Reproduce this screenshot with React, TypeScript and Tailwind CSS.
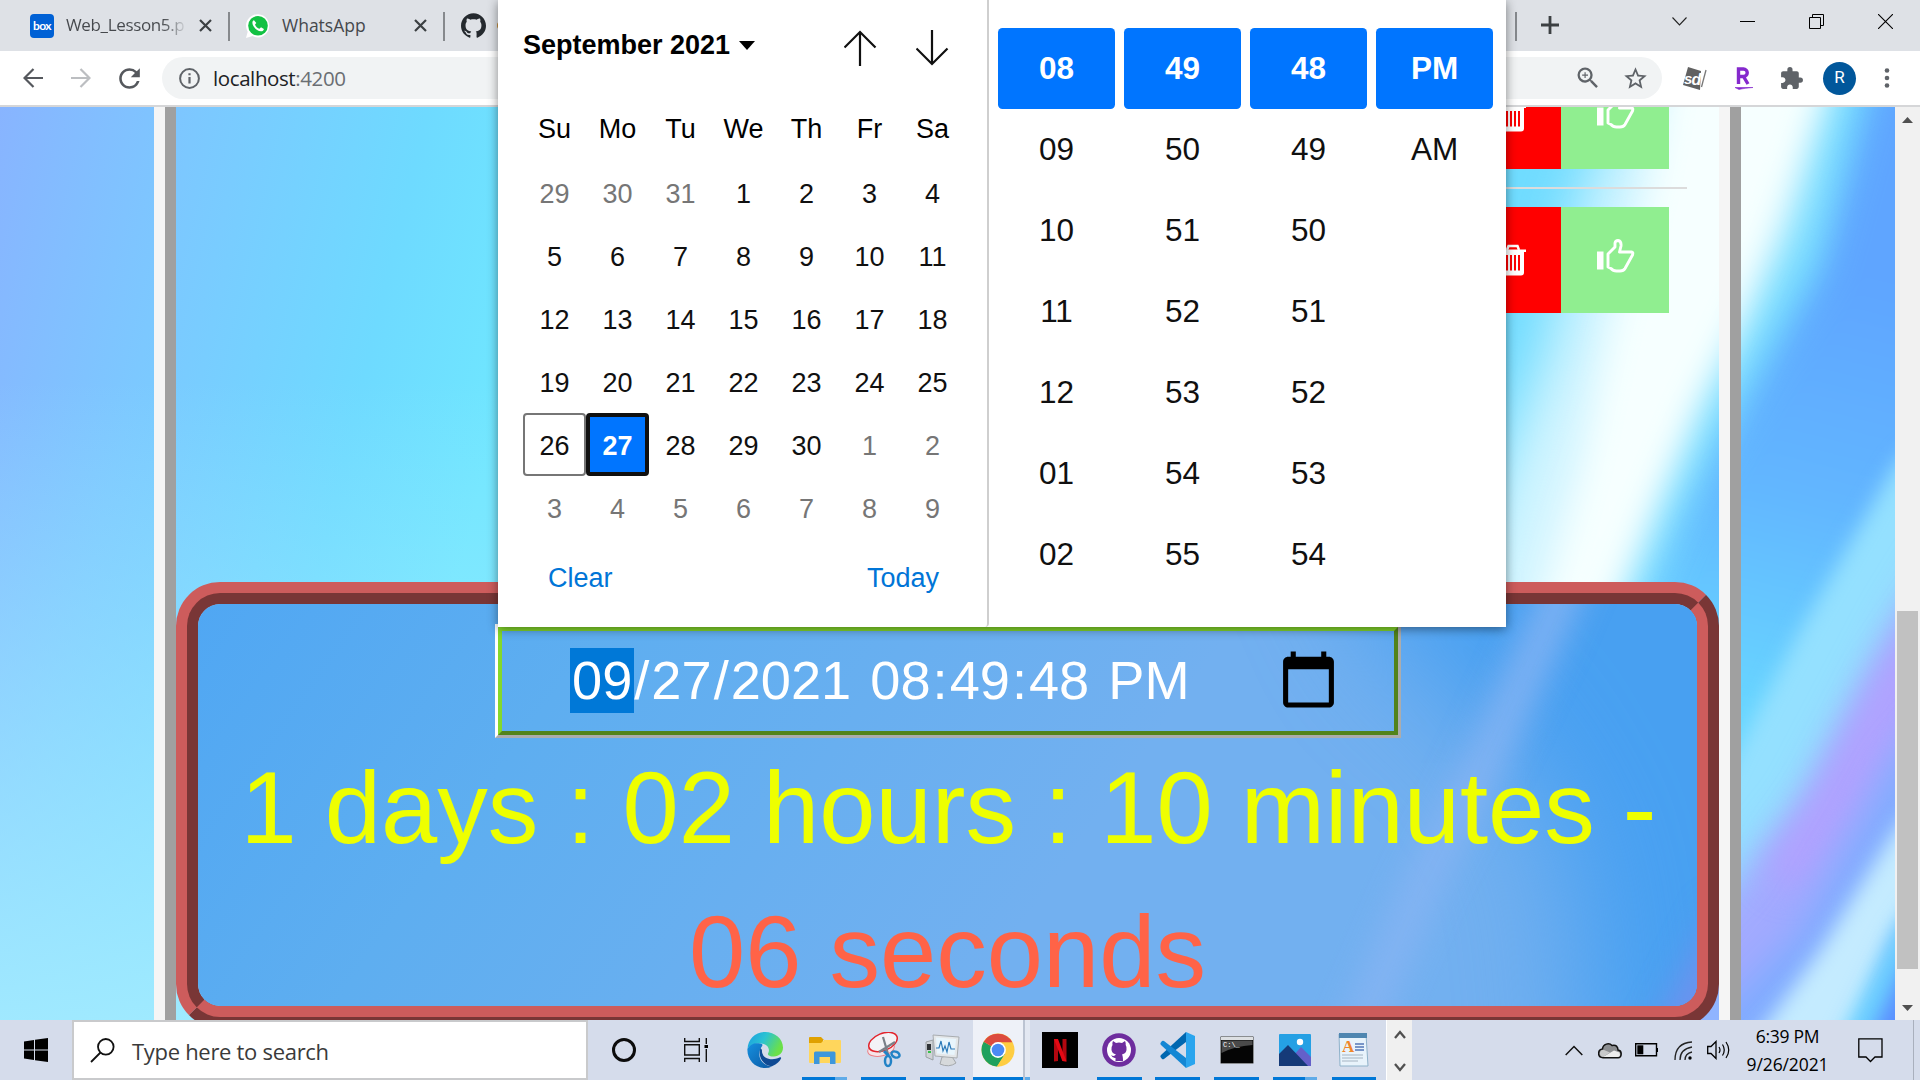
import React from "react";
import { SiGithub } from "react-icons/si";
import { MdStarBorder, MdExtension, MdRefresh, MdOutlineZoomIn } from "react-icons/md";

const UI = "font-['Open_Sans',sans-serif]";
const ARIAL = "font-['Liberation_Sans',Arial,sans-serif]";

/* ---------- Browser chrome ---------- */

function CloseX() {
  return (
    <svg width="13" height="13" viewBox="0 0 13 13" className="block">
      <path d="M1 1L12 12M12 1L1 12" stroke="#3c4043" strokeWidth="2.2" />
    </svg>
  );
}

function WhatsAppIcon() {
  return (
    <svg width="24" height="24" viewBox="0 0 24 24" className="block">
      <path d="M0 24l1.7-6.2A11.6 11.6 0 1 1 12 23.4a11.6 11.6 0 0 1-5.5-1.4z" fill="#fff" />
      <circle cx="12" cy="11.8" r="9.8" fill="#12c143" />
      <path
        d="M8 6.3c-.9.3-1.7 1.300-1.600 2.600.3 3.800 4.600 8.100 8.500 8.300 1.500.1 2.800-.9 3-2.300l-2.900-1.600-1.500 1.500c-2-.6-3.800-2.400-4.500-4.300l1.300-1.400z"
        fill="#fff"
      />
    </svg>
  );
}

function TabStrip() {
  return (
    <div className="flex h-[51px] w-full shrink-0 items-start bg-[#dee1e6]">
      <div className="ml-[30px] mt-[14px] flex h-[24px] w-[24px] shrink-0 items-center justify-center rounded-[4px] bg-[#0061d5]">
        <span className="font-[Lato,sans-serif] text-[12px] font-bold leading-none tracking-[-0.6px] text-white">box</span>
      </div>
      <div
        className={`${UI} ml-[12px] mt-[13px] w-[121px] shrink-0 whitespace-nowrap bg-gradient-to-r from-[#45484c] from-80% to-[#dee1e6] bg-clip-text text-[17px] leading-[24px] tracking-[-0.35px] text-transparent`}
      >
        Web_Lesson5.p
      </div>
      <div className="ml-[12px] mt-[19px] shrink-0"><CloseX /></div>
      <div className="ml-[16px] mt-[12px] h-[29px] w-[2px] shrink-0 bg-[#86898d]" />
      <div className="ml-[16px] mt-[14px] shrink-0"><WhatsAppIcon /></div>
      <div className={`${UI} ml-[12px] mt-[13px] w-[132px] shrink-0 text-[17.5px] leading-[24px] text-[#45484c]`}>WhatsApp</div>
      <div className="mt-[19px] shrink-0"><CloseX /></div>
      <div className="ml-[16px] mt-[12px] h-[29px] w-[2px] shrink-0 bg-[#86898d]" />
      <SiGithub className="ml-[16px] mt-[13px] h-[25px] w-[25px] shrink-0 text-[#24292e]" />
      <div className="ml-[11px] mt-[22px] h-[7px] w-[3px] shrink-0 rounded-l-full bg-[#c58f3d]" />
      <div className="ml-auto mt-[12px] h-[29px] w-[2px] shrink-0 bg-[#86898d]" />
      <svg className="ml-[24px] mt-[16px] shrink-0" width="18" height="18" viewBox="0 0 18 18">
        <path d="M9 0V18M0 9H18" stroke="#3c4043" strokeWidth="2.800" />
      </svg>
      <svg className="ml-[113px] mt-[16px] shrink-0" width="15" height="11" viewBox="0 0 15 11">
        <path d="M.5 1.500L7.500 9L14.500 1.500" fill="none" stroke="#222" strokeWidth="1.100" />
      </svg>
      <div className="ml-[53px] mt-[21px] h-px w-[15px] shrink-0 bg-black" />
      <svg className="ml-[54px] mt-[14px] shrink-0" width="15" height="15" viewBox="0 0 15 15">
        <path d="M.5 3.500H11.500V14.500H.5zM3.500 3.500V.5H14.500V11.500H11.500" fill="none" stroke="#000" />
      </svg>
      <svg className="ml-[54px] mr-[27px] mt-[14px] shrink-0" width="15" height="15" viewBox="0 0 15 15">
        <path d="M0 0L15 15M15 0L0 15" stroke="#000" strokeWidth="1.100" />
      </svg>
    </div>
  );
}

function Toolbar() {
  return (
    <div className="flex h-[56px] w-full shrink-0 items-center border-b-2 border-[#d5d6d8] bg-white">
      <svg className="ml-[23px] shrink-0" width="20" height="20" viewBox="0 0 20 20">
        <path d="M20 10H1.800M10.500 1L1.500 10L10.500 19" fill="none" stroke="#55585d" strokeWidth="2.200" />
      </svg>
      <svg className="ml-[28px] shrink-0" width="20" height="20" viewBox="0 0 20 20">
        <path d="M0 10H18.200M9.500 1L18.500 10L9.500 19" fill="none" stroke="#bcbec1" strokeWidth="2.200" />
      </svg>
      <MdRefresh className="ml-[23px] h-[31px] w-[31px] shrink-0 text-[#55585d]" />
      <div className="ml-[17px] flex h-[42px] w-[1500px] shrink-0 items-center rounded-full bg-[#f1f3f4]">
        <svg className="ml-[17px] shrink-0" width="21" height="21" viewBox="0 0 21 21">
          <circle cx="10.500" cy="10.500" r="9.400" fill="none" stroke="#5f6368" strokeWidth="2" />
          <path d="M10.500 9V15.500M10.500 5.200V7.300" stroke="#5f6368" strokeWidth="2.200" />
        </svg>
        <div className={`${UI} ml-[13px] text-[20.5px] leading-[28px] tracking-[-0.4px] text-[#202124]`}>
          localhost<span className="text-[#6a6e73]">:4200</span>
        </div>
        <MdOutlineZoomIn className="ml-auto h-[28px] w-[28px] text-[#5f6368]" />
        <MdStarBorder className="ml-[20px] mr-[13px] h-[27px] w-[27px] text-[#5f6368]" />
      </div>
      <svg className="ml-[20px] shrink-0" width="26" height="26" viewBox="0 0 26 26">
        <path d="M6 2L19 6L18 25L1 20z" fill="#616161" />
        <text x="2" y="18.500" fontSize="15" fontStyle="italic" fontWeight="700" fontFamily="Liberation Sans, sans-serif" fill="#fff">s</text>
        <text x="9.500" y="19.500" fontSize="16" fontStyle="italic" fontWeight="700" fontFamily="Liberation Sans, sans-serif" fill="#fff">d</text>
        <path d="M24 5L19.500 22" stroke="#777" strokeWidth="1.300" />
      </svg>
      <svg className="ml-[26px] shrink-0" width="20" height="24" viewBox="0 0 20 24">
        <path d="M4.500 18V3H9.500A3.700 3.700 0 0 1 9.500 10.500H5M9.500 10.500L14 18" fill="none" stroke="#8529cd" strokeWidth="3.400" />
        <path d="M1 21.500H19C13 22 9 22.500 5 23.500z" fill="#8529cd" stroke="#8529cd" strokeWidth=".6" />
      </svg>
      <MdExtension className="ml-[25px] h-[25px] w-[25px] shrink-0 text-[#5f6368]" />
      <div className="ml-[19px] flex h-[33px] w-[33px] shrink-0 items-center justify-center rounded-full bg-[#01579b] font-[Roboto,sans-serif] text-[17px] text-white">R</div>
      <svg className="ml-[28px] shrink-0" width="6" height="20" viewBox="0 0 6 20">
        <circle cx="3" cy="2.500" r="2.300" fill="#5f6368" />
        <circle cx="3" cy="10" r="2.300" fill="#5f6368" />
        <circle cx="3" cy="17.500" r="2.300" fill="#5f6368" />
      </svg>
    </div>
  );
}

/* ---------- Page ---------- */

function Wallpaper() {
  return (
    <svg className="absolute inset-0" width="1895" height="913" viewBox="0 107 1895 913" preserveAspectRatio="none">
      <defs>
        <linearGradient id="base" gradientUnits="userSpaceOnUse" x1="0" y1="107" x2="540" y2="235">
          <stop offset="0" stopColor="#88b4ff" />
          <stop offset=".35" stopColor="#7cc8ff" />
          <stop offset=".75" stopColor="#6edaff" />
          <stop offset="1" stopColor="#6fe6ff" />
        </linearGradient>
        <linearGradient id="low" x1="0" y1="0" x2="0" y2="1">
          <stop offset=".3" stopColor="#a4ecff" stopOpacity="0" />
          <stop offset="1" stopColor="#a4ecff" stopOpacity=".9" />
        </linearGradient>
        <linearGradient id="blueArea" gradientUnits="userSpaceOnUse" x1="1880" y1="280" x2="1770" y2="720">
          <stop offset="0" stopColor="#5fa5ff" />
          <stop offset=".5" stopColor="#62b6ff" />
          <stop offset="1" stopColor="#68d6ff" />
        </linearGradient>
        <filter id="b8" colorInterpolationFilters="sRGB" x="-50%" y="-20%" width="200%" height="140%"><feGaussianBlur stdDeviation="10" /></filter>
        <filter id="b16" colorInterpolationFilters="sRGB" x="-50%" y="-20%" width="200%" height="140%"><feGaussianBlur stdDeviation="17" /></filter>
        <filter id="b30" colorInterpolationFilters="sRGB" x="-50%" y="-20%" width="200%" height="140%"><feGaussianBlur stdDeviation="28" /></filter>
      </defs>
      <rect x="0" y="107" width="1895" height="913" fill="url(#base)" />
      <rect x="0" y="107" width="1300" height="913" fill="url(#low)" />
      <rect x="1400" y="107" width="495" height="913" fill="#70dcff" />
      <path d="M1890 40L1865 107L1820 270L1755 380L1690 500L1640 610L1500 1100H1990V40z" fill="url(#blueArea)" filter="url(#b16)" />
      <path d="M1650 40L1580 200L1550 340L1500 470L1450 640L1600 640L1655 500L1700 400L1745 310L1790 220L1830 40z" fill="#d4f5ff" filter="url(#b30)" />
      <path d="M1675 40L1650 180L1610 330L1580 470L1530 640L1600 640L1655 500L1695 405L1738 320L1775 230L1825 90L1835 40z" fill="#f6ffff" filter="url(#b16)" />
      <path d="M1975 380L1895 465L1800 630L1735 755L1690 850V1100H1975z" fill="#94e0ff" filter="url(#b8)" />
      <path d="M1975 490L1895 620L1800 800L1690 940V1100H1975z" fill="#a2aaff" filter="url(#b16)" />
      <path d="M1960 590L1895 685L1835 800L1780 880" fill="none" stroke="#b4a0ff" strokeWidth="36" filter="url(#b16)" />
      <path d="M1960 690L1895 765L1800 930L1700 1030V1100H1960z" fill="#80acff" filter="url(#b16)" />
      <path d="M1975 740L1895 830L1820 950L1740 1060H1850L1895 935L1975 830z" fill="#c4ebff" filter="url(#b8)" />
      <path d="M1960 840L1895 930L1830 1060H1960z" fill="#6cd4ff" filter="url(#b8)" />
      <path d="M1960 890L1905 960L1860 1060H1960z" fill="#5a8dff" filter="url(#b8)" />
      <rect x="1500" y="960" width="225" height="60" fill="#90b4ff" />
    </svg>
  );
}

function CardBackdrop() {
  return (
    <svg className="absolute inset-0 rounded-[22px]" width="1499" height="402" viewBox="198 604 1499 402" preserveAspectRatio="none">
      <defs>
        <linearGradient id="card" gradientUnits="userSpaceOnUse" x1="198" y1="604" x2="900" y2="1100">
          <stop offset="0" stopColor="#50a7f3" />
          <stop offset=".4" stopColor="#5eaef0" />
          <stop offset="1" stopColor="#72b0f0" />
        </linearGradient>
        <filter id="c30" colorInterpolationFilters="sRGB" x="-100%" y="-50%" width="300%" height="200%"><feGaussianBlur stdDeviation="55" /></filter>
        <filter id="c12" colorInterpolationFilters="sRGB" x="-50%" y="-50%" width="200%" height="200%"><feGaussianBlur stdDeviation="16" /></filter>
      </defs>
      <rect x="198" y="604" width="1499" height="402" fill="url(#card)" />
      <path d="M1300 440L1390 640L1500 740L1570 860L1600 1200H1900V440z" fill="#48a0f1" filter="url(#c30)" />
      <path d="M1600 500L1550 620L1490 750L1420 890L1330 1100" fill="none" stroke="#86b4f3" strokeWidth="40" opacity=".85" filter="url(#c12)" />
      <path d="M1720 900L1650 1040H1740z" fill="#6c92ee" filter="url(#c12)" />
    </svg>
  );
}

function Trash() {
  return (
    <svg width="26" height="32" viewBox="0 0 26 32" className="block">
      <path d="M7 6L8.500 2H17.500L19 6" fill="none" stroke="#fff" strokeWidth="2.500" />
      <path d="M0 5.500H26V8H24V28.500Q24 31.500 21 31.500H5Q2 31.500 2 28.500V8H0z" fill="#fff" />
      <path d="M7 11V26.500M11 11V26.500M15 11V26.500M19 11V26.500" stroke="#f00" strokeWidth="2" />
    </svg>
  );
}

function Thumb() {
  return (
    <svg width="38" height="34" viewBox="0 0 38 34" className="block">
      <path d="M0 12.500H6.500V30.500H0z" fill="#fff" />
      <path
        d="M11 15L18 8V4Q18.500 1.500 21 1.500Q24.500 2 24 7L22.500 13H34.500Q36.500 13 35.500 16L28 29.500Q26.500 32 23 32H19.500Q16 32 14 29.500L11 28z"
        fill="none"
        stroke="#fff"
        strokeWidth="2.900"
        strokeLinejoin="round"
      />
    </svg>
  );
}

function TaskActions() {
  return (
    <div className="flex h-[106px] w-[216px]">
      <div className="flex w-[108px] items-center justify-center bg-[#ff0000]">
        <div className="ml-[11px]"><Trash /></div>
      </div>
      <div className="flex w-[108px] items-center justify-center bg-[#90ee90]">
        <div className="ml-[1px] mt-[-8px]"><Thumb /></div>
      </div>
    </div>
  );
}

function DateField() {
  return (
    <div className="ml-[297px] mt-[20px] h-[114px] w-[906px] border-[3px] border-b-[#acacac] border-l-white border-r-[#acacac] border-t-white">
      <div className="flex h-full w-full items-center border-4 border-b-[#52831b] border-l-[#84d82c] border-r-[#52831b] border-t-[#84d82c] pb-[2px]">
        <div className={`${ARIAL} ml-[68px] flex items-center whitespace-pre text-[54.2px] leading-[65px] text-white`}>
          <span className="bg-[#0078d7] px-[2px]">09</span>
          <span>/</span>
          <span className="px-[2px]">27</span>
          <span>/</span>
          <span className="px-[2px]">2021</span>
          <span> </span>
          <span className="px-[2px]">08</span>
          <span>:</span>
          <span className="px-[2px]">49</span>
          <span>:</span>
          <span className="px-[2px]">48</span>
          <span> </span>
          <span className="px-[2px]">PM</span>
        </div>
        <svg className="mb-[2px] ml-auto mr-[55px]" width="61" height="61" viewBox="0 0 24 24">
          <path d="M20 3h-1V1h-2v2H7V1H5v2H4c-1.100 0-2 .9-2 2v16c0 1.100.9 2 2 2h16c1.100 0 2-.9 2-2V5c0-1.100-.9-2-2-2zm0 18H4V8h16v13z" />
        </svg>
      </div>
    </div>
  );
}

function Page() {
  return (
    <div className="relative flex h-[913px] w-full shrink-0 overflow-hidden">
      <Wallpaper />
      <div className="relative ml-[154px] flex h-full w-[1587px] shrink-0">
        <div className="w-[11px] bg-[#f5f5f5]" />
        <div className="w-[11px] bg-[#a0a0a0]" />
        <div className="flex w-[1543px] flex-col">
          <div className="mr-[50px] mt-[-44px] flex h-[106px] shrink-0 justify-end"><TaskActions /></div>
          <div className="mr-[32px] mt-[18px] h-[2px] w-[600px] shrink-0 self-end bg-[#dcdcdc]" />
          <div className="mr-[50px] mt-[18px] flex h-[106px] shrink-0 justify-end"><TaskActions /></div>
          <div className="mt-[269px] h-[446px] shrink-0 rounded-[44px] border-[22px] border-[#cd5c5c] [border-style:ridge]">
            <div className="relative flow-root h-full">
              <CardBackdrop />
              <div className="relative flow-root">
                <DateField />
                <div className={`${ARIAL} text-center text-[101.100px] text-[#eeff00]`}>
                  <div className="whitespace-nowrap pl-[2px] leading-[140px]">1 days : 02 hours : 10 minutes -</div>
                  <div className="mt-[18px] leading-[112px] text-[#ff6347]">06 seconds</div>
                </div>
              </div>
            </div>
          </div>
        </div>
        <div className="w-[11px] bg-[#f5f5f5]" />
        <div className="w-[11px] bg-[#a0a0a0]" />
      </div>
      <div className="relative ml-auto flex w-[25px] flex-col items-center bg-[#f1f1f1]">
        <svg className="mt-[10px]" width="11" height="6" viewBox="0 0 11 6"><path d="M0 6L5.500 0L11 6z" fill="#505050" /></svg>
        <div className="mt-[488px] h-[358px] w-[21px] bg-[#c1c1c1]" />
        <svg className="mt-[36px]" width="11" height="6" viewBox="0 0 11 6"><path d="M0 0L5.500 6L11 0z" fill="#505050" /></svg>
      </div>
    </div>
  );
}

/* ---------- Date-time picker ---------- */

const weekdays = ["Su", "Mo", "Tu", "We", "Th", "Fr", "Sa"];
const days = [29, 30, 31, ...Array.from({ length: 30 }, (_, i) => i + 1), 1, 2, 3, 4, 5, 6, 7, 8, 9];
const timeColumns = [
  ["08", "09", "10", "11", "12", "01", "02"],
  ["49", "50", "51", "52", "53", "54", "55"],
  ["48", "49", "50", "51", "52", "53", "54"],
  ["PM", "AM"],
];

function dayClass(i: number) {
  if (i === 28) return "rounded-[4px] border-2 border-[#767676] text-[#101010]";
  if (i === 29) return "rounded-[4px] border-4 border-[#101010] bg-[#0075ff] font-bold text-white";
  if (i < 3 || i > 32) return "text-[#767676]";
  return "text-[#101010]";
}

function Picker() {
  return (
    <div className={`${ARIAL} absolute left-[498px] top-0 flex h-[627px] w-[1008px] bg-white text-black shadow-[0_2px_10px_rgba(0,0,0,0.45)]`}>
      <div className="w-[491px] rounded-br-[4px] border-r-2 border-[#cfcfcf]">
        <div className="flex h-[97px] items-start">
          <div className="ml-[25px] mt-[30px] whitespace-nowrap text-[27px] font-bold leading-[31px]">September 2021</div>
          <svg className="ml-[9px] mt-[41px]" width="16" height="9" viewBox="0 0 16 9"><path d="M0 0H16L8 9z" /></svg>
          <svg className="ml-auto mt-[30px]" width="33" height="36" viewBox="0 0 33 36">
            <path d="M16 36V1.500M.5 17.500L16 2L31.500 17.500" fill="none" stroke="#101010" strokeWidth="2.200" />
          </svg>
          <svg className="ml-[39px] mr-[38px] mt-[30px]" width="33" height="36" viewBox="0 0 33 36">
            <path d="M16 0V34.500M.5 18.500L16 34L31.500 18.500" fill="none" stroke="#101010" strokeWidth="2.200" />
          </svg>
        </div>
        <div className="ml-[25px] grid w-[441px] grid-cols-7 text-center text-[27px]">
          {weekdays.map((d) => (
            <div key={d} className="h-[64px] leading-[65px]">{d}</div>
          ))}
          {days.map((d, i) => (
            <div key={i} className={`flex h-[63px] items-center justify-center pt-[3px] ${dayClass(i)}`}>{d}</div>
          ))}
        </div>
        <div className="ml-[50px] mr-[48px] mt-[24px] flex justify-between text-[27px] leading-[31px] text-[#0075d7]">
          <span>Clear</span>
          <span>Today</span>
        </div>
      </div>
      <div className="ml-[9px] mt-[28px] flex gap-[9px]">
        {timeColumns.map((col, c) => (
          <div key={c} className="w-[117px] text-center text-[31.500px]">
            {col.map((v, i) => (
              <div
                key={v}
                className={
                  i === 0
                    ? "h-[81px] rounded-[4.500px] bg-[#0075ff] font-bold leading-[80px] text-white"
                    : "h-[81px] leading-[80px] text-[#101010]"
                }
              >
                {v}
              </div>
            ))}
          </div>
        ))}
      </div>
    </div>
  );
}

/* ---------- Taskbar ---------- */

function EdgeIcon() {
  return (
    <svg width="36" height="36" viewBox="0 0 36 36">
      <defs>
        <linearGradient id="e1" x1="0" y1="0" x2="1" y2=".4"><stop offset="0" stopColor="#1b9de2" /><stop offset=".5" stopColor="#2bc3d2" /><stop offset="1" stopColor="#6be048" /></linearGradient>
        <linearGradient id="e2" x1="0" y1="0" x2="1" y2="1"><stop offset="0" stopColor="#1590df" /><stop offset="1" stopColor="#0c59a4" /></linearGradient>
      </defs>
      <path d="M.5 17C1 7 8.500 0 18 0C28 0 36 7 36 15.500C36 21 32 24.500 27 24.500C23 24.500 20.500 23 21 21.500C23.500 18 21 12 14 11.500C8 11 3 13 .5 17z" fill="url(#e1)" />
      <path d="M.4 17C3 12 8 10.500 13 11.500C18 12.500 14 14 13 18C10 27 17 34 25 34.500Q22 36 18 36C8 36 0 28 .4 17z" fill="url(#e2)" />
      <path d="M13.500 16C10 26 18 34.500 25 34.200C30 32 33 29 34 26.500C34.500 25.500 33.500 25 32.500 25.600C24 29.500 14 26 15 18z" fill="#0f4a94" />
    </svg>
  );
}

function ExplorerIcon() {
  return (
    <svg width="32" height="27" viewBox="0 0 32 27">
      <path d="M0 1Q0 0 1 0H12L15 3H14V10H0z" fill="#e0a100" />
      <path d="M0 6H12L15 3H31Q32 3 32 4V25Q32 26 31 26H1Q0 26 0 25z" fill="#ffd65c" />
      <path d="M5 27V16Q5 14.500 6.500 14.500H25Q26.500 14.500 26.500 16V27H21V20H10.500V27z" fill="#3d97db" />
    </svg>
  );
}

function SnipIcon() {
  return (
    <svg width="34" height="36" viewBox="0 0 34 36">
      <ellipse cx="14" cy="17" rx="13.500" ry="7" fill="#f6e4e8" stroke="#ec8087" strokeWidth="1" transform="rotate(-12 14 17)" />
      <ellipse cx="16" cy="10" rx="15" ry="8.500" fill="#f3f3f6" stroke="#e2242c" strokeWidth="1.500" transform="rotate(-22 16 10)" />
      <path d="M16 5L21 22M28 10L12 20" stroke="#7b8087" strokeWidth="2.200" />
      <path d="M17 19L22 24" stroke="#2383c6" strokeWidth="3" />
      <ellipse cx="21" cy="29" rx="3" ry="5" fill="none" stroke="#2383c6" strokeWidth="2.500" />
      <ellipse cx="28.500" cy="22.500" rx="4.200" ry="2.800" fill="none" stroke="#2383c6" strokeWidth="2.500" transform="rotate(25 28.500 22.500)" />
    </svg>
  );
}

function PerfIcon() {
  return (
    <svg width="36" height="34" viewBox="0 0 36 34">
      <path d="M1 9L8 7V27L1 24z" fill="#d0d3d6" stroke="#9aa0a4" />
      <path d="M2 11H6V17H2z" fill="#2f3337" />
      <path d="M3 18H6V20H3z" fill="#35c24a" />
      <path d="M17 24L26 22L31 30Q24 35 15 31z" fill="#d6d9db" stroke="#a4a8ab" />
      <path d="M8 2L34 4L32 25L10 23z" fill="#e4e7e9" stroke="#a9adb0" />
      <path d="M11 4.500L31 6L29.500 22L12 20.500z" fill="#e8f5fc" />
      <path d="M11 15H14L16 8L18 18L20 13L22 19L24 9L26 16H30" fill="none" stroke="#2a79b8" strokeWidth="1.200" />
    </svg>
  );
}

function ChromeIcon() {
  return (
    <svg width="34" height="34" viewBox="0 0 34 34">
      <circle cx="17" cy="17" r="16.500" fill="#fecd42" />
      <path d="M17 17L2.700 8.800A16.500 16.500 0 0 0 16 33.500L24 21z" fill="#1fa15d" />
      <path d="M17 17L2.700 8.800A16.500 16.500 0 0 1 31.300 9.300H17z" fill="#dc4b3e" />
      <path d="M24 21L16 33.500H18L31 22z" fill="#fecd42" />
      <circle cx="17" cy="17" r="7.900" fill="#fff" />
      <circle cx="17" cy="17" r="6.300" fill="#4a8af4" />
    </svg>
  );
}

function NetflixIcon() {
  return (
    <svg width="36" height="36" viewBox="0 0 36 36">
      <rect width="36" height="36" />
      <path d="M12 7H16V29L12 29.500zM20.500 7H24.500V29.500L20.500 29z" fill="#b20710" />
      <path d="M12 7H16L24.500 29.500L20.300 29z" fill="#e50914" />
    </svg>
  );
}

function GitHubDesktopIcon() {
  return (
    <svg width="34" height="34" viewBox="0 0 34 34">
      <circle cx="17" cy="17" r="16.800" fill="#6e2d9e" />
      <circle cx="17" cy="17" r="12" fill="#fff" />
      <path d="M11 8L14 10Q17 9 20 10L23 8Q24 10 23.700 12Q25 14 24.500 17Q24 20.500 20 21.500Q21 23 21 28H13.500V25Q10.500 25.500 9 22Q12 24 14 21.500Q10 20.500 9.500 17Q9 14 10.500 12Q10 10 11 8z" fill="#6e2d9e" />
    </svg>
  );
}

function VSCodeIcon() {
  return (
    <svg width="36" height="36" viewBox="0 0 36 36">
      <path d="M26 0L35 4V32L26 36z" fill="#2aa5ee" />
      <path d="M26 0V10L4 27Q3 27.500 2 27L.5 25Q0 24 1 23z" fill="#0067b0" />
      <path d="M26 36V26L4 9Q3 8.500 2 9L.5 11Q0 12 1 13z" fill="#1487d4" />
    </svg>
  );
}

function CmdIcon() {
  return (
    <svg width="34" height="28" viewBox="0 0 34 28">
      <rect x=".5" y=".5" width="33" height="27" rx="1" fill="#050505" stroke="#8a8d90" />
      <rect x="1" y="1" width="32" height="3" fill="#dcdfe2" />
      <path d="M1.500 4.500H32.500V9Q15 10 1.500 17z" fill="#4a4a4a" />
      <text x="3" y="11" fontSize="7" fontFamily="Liberation Mono, monospace" fill="#fff">C:\_</text>
    </svg>
  );
}

function PhotosIcon() {
  return (
    <svg width="32" height="32" viewBox="0 0 32 32">
      <rect width="32" height="32" rx="1" fill="#25a0e4" />
      <path d="M15 21L22 13L32 23V32H15z" fill="#6460c9" />
      <path d="M0 20L9 11L29 32H0z" fill="#153a78" />
      <circle cx="21" cy="8" r="3.200" fill="#fff" />
    </svg>
  );
}

function WordPadIcon() {
  return (
    <svg width="32" height="34" viewBox="0 0 32 34">
      <path d="M1 1H28L30 33H2z" fill="#e8f3fb" stroke="#8fb2ca" />
      <path d="M1 0H29V5H1z" fill="#4f86b0" />
      <text x="4" y="19" fontSize="17" fontWeight="700" fontFamily="Liberation Serif, serif" fill="#f0872a">A</text>
      <path d="M17 11H26M17 14H26M17 17H26" stroke="#5478b8" strokeWidth="1.500" />
      <path d="M4 22H25M4 25H25M4 28H20" stroke="#a5b4c2" />
    </svg>
  );
}

function TaskbarApp({ children, w, line, split }: { children: React.ReactNode; w: string; line?: string; split?: boolean }) {
  return (
    <div className={`flex h-full shrink-0 flex-col items-center ${w}`}>
      <div className="flex h-[57px] w-full items-center justify-center pb-[1px] pt-[4px]">{children}</div>
      {line && (
        <div className={`flex h-[3px] bg-[#0078d7] ${line}`}>
          {split && <div className="ml-auto h-full w-[12px] bg-[#5fabe8]" />}
        </div>
      )}
    </div>
  );
}

function Taskbar() {
  return (
    <div className="flex h-[60px] w-full shrink-0 items-start overflow-hidden bg-[#d5dceb]">
      <div className="flex h-full w-[72px] shrink-0 items-center justify-center">
        <svg width="24" height="24" viewBox="0 0 24 24">
          <path d="M0 3.400L10 2V11.500H0zM11 1.800L24 0V11.500H11zM0 12.500H10V22L0 20.600zM11 12.500H24V24L11 22.200z" />
        </svg>
      </div>
      <div className="flex h-full w-[516px] shrink-0 items-center border-2 border-[#c9cacc] bg-white">
        <svg className="ml-[16px]" width="25" height="25" viewBox="0 0 25 25">
          <circle cx="15.800" cy="8.800" r="7.800" fill="none" stroke="#111" strokeWidth="1.800" />
          <path d="M10.500 14.500L1 24" stroke="#111" strokeWidth="1.800" />
        </svg>
        <div className={`${UI} ml-[17px] mt-[2px] text-[22px] leading-[30px] tracking-[-0.3px] text-[#3a3a3a]`}>Type here to search</div>
      </div>
      <div className="flex h-full w-[72px] shrink-0 items-center justify-center">
        <div className="h-[24px] w-[24px] rounded-full border-[3px] border-[#0c0c0c]" />
      </div>
      <div className="mr-[4px] flex h-full w-[71px] shrink-0 items-center justify-center">
        <svg width="24" height="24" viewBox="0 0 24 24">
          <path d="M.7 0V3.500H15.300V0M.7 24V20.500H15.300V24M.7 6.700H15.300V17H.7zM22.300 0V6M22.300 11V24" fill="none" stroke="#111" strokeWidth="1.400" />
          <rect x="20.500" y="7" width="3.500" height="3" />
        </svg>
      </div>
      <TaskbarApp w="w-[60px]"><EdgeIcon /></TaskbarApp>
      <TaskbarApp w="w-[59px]" line="w-[45px]" split><ExplorerIcon /></TaskbarApp>
      <TaskbarApp w="w-[59px]" line="w-[45px]"><SnipIcon /></TaskbarApp>
      <TaskbarApp w="w-[59px]" line="w-[45px]"><PerfIcon /></TaskbarApp>
      <div className="flex h-full w-[58px] shrink-0">
        <div className="ml-[1px] flex h-full w-[50px] bg-[#eef1f8]">
          <TaskbarApp w="w-[50px]" line="w-[50px]"><ChromeIcon /></TaskbarApp>
        </div>
        <div className="flex h-full w-[7px] flex-col justify-end border-l-2 border-[#bcc4d2] bg-[#e3e8f2]">
          <div className="h-[3px] bg-[#5fabe8]" />
        </div>
      </div>
      <TaskbarApp w="w-[60px]"><NetflixIcon /></TaskbarApp>
      <TaskbarApp w="w-[58px]" line="w-[45px]"><GitHubDesktopIcon /></TaskbarApp>
      <TaskbarApp w="w-[59px]" line="w-[45px]"><VSCodeIcon /></TaskbarApp>
      <TaskbarApp w="w-[59px]" line="w-[45px]"><CmdIcon /></TaskbarApp>
      <TaskbarApp w="w-[58px]" line="w-[44px]" split><PhotosIcon /></TaskbarApp>
      <TaskbarApp w="w-[59px]" line="w-[44px]"><WordPadIcon /></TaskbarApp>
      <div className="ml-[3px] flex h-full w-[26px] shrink-0 flex-col items-center border-l border-white bg-[#f0f0f0]">
        <svg className="mt-[10px]" width="12" height="9" viewBox="0 0 12 9"><path d="M1 8L6 2L11 8" fill="none" stroke="#505050" strokeWidth="2.300" /></svg>
        <svg className="mt-[24px]" width="12" height="9" viewBox="0 0 12 9"><path d="M1 1L6 7L11 1" fill="none" stroke="#505050" strokeWidth="2.300" /></svg>
      </div>
      <div className="ml-auto flex h-full items-center">
        <svg width="18" height="11" viewBox="0 0 18 11"><path d="M.7 10L9 1.500L17.300 10" fill="none" stroke="#111" strokeWidth="1.500" /></svg>
        <svg className="ml-[15px]" width="24" height="17" viewBox="0 0 24 17">
          <path d="M5 15.800C-1 15.500-.5 7.500 4.500 7C5 2 11 .2 14 3.500C18 2.200 20 5 20 8C24.500 8.500 24 15.500 20 15.800z" fill="#8b8d90" stroke="#111" strokeWidth="1.500" />
          <path d="M5 15L16 8.500L21.500 10.500Q23 15 19.500 15z" fill="#ececec" />
          <path d="M1.800 12Q2 8 5.500 7.800L12 10.500L5 15Q2.500 14.500 1.800 12z" fill="#c8c9ca" />
        </svg>
        <svg className="ml-[13px]" width="24" height="14" viewBox="0 0 24 14">
          <path d="M.7.7H21.500V12.800H.7z" fill="none" stroke="#000" strokeWidth="1.400" />
          <rect x="2.300" y="2.300" width="6" height="9" />
          <rect x="21.500" y="5" width="1.500" height="4" />
        </svg>
        <svg className="ml-[15px]" width="19" height="19" viewBox="0 0 19 19">
          <path d="M1 19Q1 2 18 1M6 19Q6 8 18 6M11 19Q11 12.500 18 11" fill="none" stroke="#222" strokeWidth="1.300" />
          <circle cx="16" cy="17" r="1.700" />
        </svg>
        <svg className="ml-[14px]" width="23" height="20" viewBox="0 0 23 20">
          <path d="M.7 6.500H4L9 1.500V18.500L4 13.500H.7z" fill="none" stroke="#000" strokeWidth="1.300" />
          <path d="M12 7Q14 10 12 13M15.500 4.500Q19 10 15.500 15.500M19 2Q24.500 10 19 18" fill="none" stroke="#000" strokeWidth="1.200" />
        </svg>
        <div className={`${UI} ml-[11px] mt-[-1px] w-[94px] text-center text-[17.5px] leading-[28px] text-black`}>
          <div className="tracking-[-0.3px]">6:39 PM</div>
          <div className="tracking-[-0.1px]">9/26/2021</div>
        </div>
        <svg className="ml-[23px]" width="25" height="25" viewBox="0 0 25 25">
          <path d="M.8.800H24V19H17L12.500 23.500L8 19H.8z" fill="none" stroke="#000" strokeWidth="1.300" />
        </svg>
        <div className="ml-[30px] mr-[6px] h-[60px] w-[1.500px] bg-[#a9b0bd]" />
      </div>
    </div>
  );
}

export default function App() {
  return (
    <div className="relative flex h-[1080px] w-[1920px] flex-col overflow-hidden">
      <TabStrip />
      <Toolbar />
      <Page />
      <Taskbar />
      <Picker />
    </div>
  );
}
